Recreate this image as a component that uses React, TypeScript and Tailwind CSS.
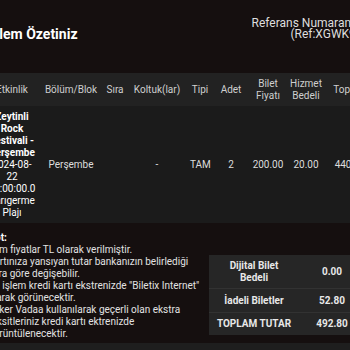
const cols =
  'grid grid-cols-[48px_70px_18px_66px_20px_42px_32px_44px_44px] items-center text-center';

const headers = [
  'Etkinlik',
  'Bölüm/Blok',
  'Sıra',
  'Koltuk(lar)',
  'Tipi',
  'Adet',
  'Bilet Fiyatı',
  'Hizmet Bedeli',
  'Toplam',
];

const notes = [
  'Tüm fiyatlar TL olarak verilmiştir.',
  'Kartınıza yansıyan tutar bankanızın belirlediği',
  'kura göre değişebilir.',
  'Bu işlem kredi kartı ekstrenizde "Biletix Internet"',
  'olarak görünecektir.',
  'Şeker Vadaa kullanılarak geçerli olan ekstra',
  'taksitleriniz kredi kartı ektrenizde',
  'görüntülenecektir.',
];

export default function App() {
  return (
    <div className="w-[350px] h-[350px] overflow-hidden bg-[#150f0f] font-['Roboto',sans-serif]">
      <div className="-ml-3 w-[384px]">
        {/* Page header */}
        <div className="h-[73px] flex items-center justify-between pr-3 pb-1">
          <h1 className="text-[14px] font-bold text-white whitespace-nowrap">
            İşlem Özetiniz
          </h1>
          <div className="flex flex-col items-end text-[12px] leading-[11px] text-[#dedede] whitespace-nowrap mb-3">
            <span>Referans Numaranız</span>
            <span>(Ref:XGWK9)</span>
          </div>
        </div>

        {/* Table */}
        <div className={`${cols} h-[33px] bg-[#222222] text-[10px] leading-3 text-[#cfcfcf]`}>
          {headers.map((h) => (
            <div key={h}>{h}</div>
          ))}
        </div>
        <div className={`${cols} h-[117px] bg-[#1b1b1b] text-[10px] leading-3 text-[#dddddd]`}>
          <div className="text-white">
            <div className="font-bold">Zeytinli Rock Festivali - Perşembe</div>
            <div>2024-08-22 20:00:00.0</div>
            <div>Sarıgerme Plajı</div>
          </div>
          <div>Perşembe</div>
          <div></div>
          <div>-</div>
          <div>TAM</div>
          <div>2</div>
          <div>200.00</div>
          <div>20.00</div>
          <div>440.00</div>
        </div>

        {/* Notes + summary */}
        <div className="h-[120px] flex items-start justify-between pt-[9px]">
          <div className="text-[10px] leading-3 text-[#e2e2e2] whitespace-nowrap">
            <div className="font-bold text-white">Not:</div>
            {notes.map((n) => (
              <div key={n}>{n}</div>
            ))}
          </div>
          <div className="mt-[23px] mr-[7px] w-[156px] bg-[#262626] text-[10px] leading-3 font-bold text-[#e8e8e8]">
            <div className="grid grid-cols-[90px_66px] items-center h-[34px] border-b border-[#323232] text-center">
              <div>
                Dijital Bilet
                <br />
                Bedeli
              </div>
              <div>0.00</div>
            </div>
            <div className="grid grid-cols-[90px_66px] items-center h-6 border-b border-[#323232] text-center">
              <div>İadeli Biletler</div>
              <div>52.80</div>
            </div>
            <div className="grid grid-cols-[90px_66px] items-center h-[22px] text-center">
              <div className="whitespace-nowrap">TOPLAM TUTAR</div>
              <div>492.80</div>
            </div>
          </div>
        </div>

        <div className="h-10 bg-[#1e1e1e]"></div>
      </div>
    </div>
  );
}
